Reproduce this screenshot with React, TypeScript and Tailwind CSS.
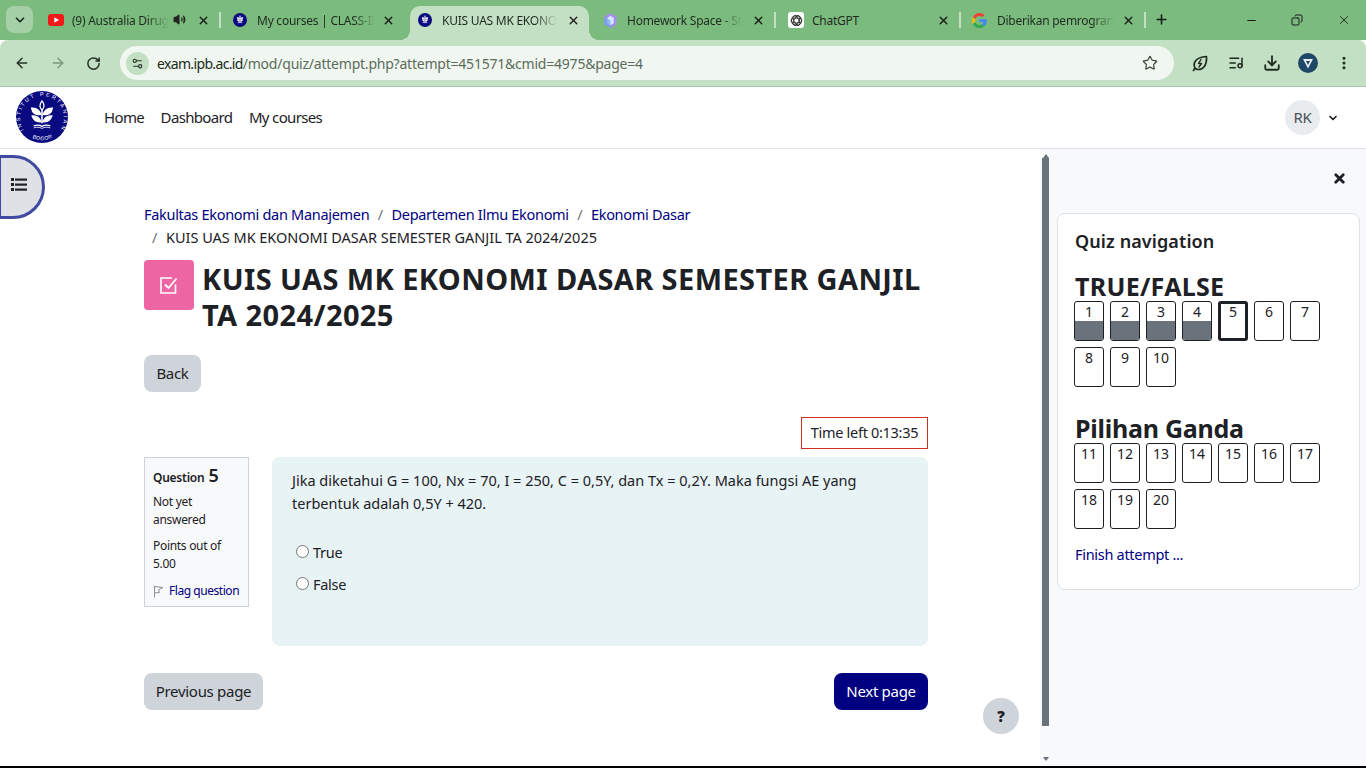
import { ArrowLeft, ArrowRight, ChevronDown, Download, EllipsisVertical, ListMusic, Minus, Plus, RotateCw, Settings2, Star, Volume2, X, Copy } from "lucide-react"

function IpbLogo({ size = 14 }: { size?: number }) {
  const big = size > 30
  return (
    <svg width={size} height={size} viewBox="0 0 100 100" className="shrink-0">
      <circle cx="50" cy="50" r="50" fill="#0a0a80" />
      <defs>
        <path id="logoTop" d="M 15 75 A 42 42 0 1 1 85 75" />
        <path id="logoBottom" d="M 27 88 A 44 44 0 0 0 73 88" />
      </defs>
      {big && (
        <text fontSize="10.5" fill="#fff" fontFamily="Liberation Sans, sans-serif">
          <textPath href="#logoTop" textLength="178">INSTITUT PERTANIAN</textPath>
        </text>
      )}
      {big && (
        <text fontSize="10" fill="#fff" fontFamily="Liberation Sans, sans-serif">
          <textPath href="#logoBottom" startOffset="10%" textLength="40">BOGOR</textPath>
        </text>
      )}
      <g fill="none" stroke="#fff" strokeWidth={big ? 2.4 : 5}>
        <path d="M50 19c-5 6-5 12 0 18 5-6 5-12 0-18z" />
        <path d="M50 62V37" strokeWidth="3" />
        <path d="M30 33c1 9 8 14 18 12-3-8-9-13-18-12z" fill="#fff" />
        <path d="M70 33c-1 9-8 14-18 12 3-8 9-13 18-12z" fill="#fff" />
        <path d="M31 48c3 8 9 12 17 11-3-8-9-12-17-11z" fill="#fff" />
        <path d="M69 48c-3 8-9 12-17 11 3-8 9-12 17-11z" fill="#fff" />
        <path d="M34 67c6-2 11-2 16 1 5-3 10-3 16-1" />
        <path d="M34 71c6-2 11-2 16 1 5-3 10-3 16-1" strokeWidth="1.6" />
      </g>
    </svg>
  )
}

function YoutubeIcon() {
  return (
    <svg width="16" height="12" viewBox="0 0 16 12" className="shrink-0">
      <rect width="16" height="12" rx="3" fill="#f01818" />
      <path d="M6.3 3.3v5.4L11 6z" fill="#fff" />
    </svg>
  )
}

function GemIcon() {
  return (
    <svg width="15" height="15" viewBox="0 0 16 16" className="shrink-0">
      <path d="M8 0l6.500 4v8L8 16l-6.500-4V4z" fill="#a48cf0" />
      <path d="M8 3l3.500 2.200v5.600L8 13l-3.500-2.200V5.200z" fill="#d7e6fb" />
      <path d="M1.500 4L8 8v8l-6.500-4z" fill="#6fa4ec" opacity="0.7" />
    </svg>
  )
}

function ChatGptIcon() {
  return (
    <span className="size-[16px] rounded-[3px] bg-white flex items-center justify-center shrink-0">
      <svg width="13" height="13" viewBox="0 0 16 16" fill="none" stroke="#222" strokeWidth="1.1">
        <circle cx="8" cy="8" r="6.400" />
        <ellipse cx="8" cy="8" rx="6.400" ry="3" />
        <ellipse cx="8" cy="8" rx="6.400" ry="3" transform="rotate(60 8 8)" />
        <ellipse cx="8" cy="8" rx="6.400" ry="3" transform="rotate(120 8 8)" />
      </svg>
    </span>
  )
}

function GoogleIcon() {
  return (
    <svg width="15" height="15" viewBox="0 0 48 48" className="shrink-0 -ml-px">
      <path fill="#EA4335" d="M24 9.500c3.500 0 6.700 1.200 9.200 3.600l6.900-6.900C35.900 2.400 30.500 0 24 0 14.600 0 6.500 5.400 2.600 13.200l8 6.200C12.500 13.700 17.800 9.500 24 9.500z" />
      <path fill="#4285F4" d="M47 24.500c0-1.600-.1-3.100-.4-4.500H24v9h12.900c-.6 3-2.200 5.500-4.700 7.200l7.700 6C44.400 38 47 31.800 47 24.500z" />
      <path fill="#FBBC05" d="M10.600 28.600c-.5-1.400-.8-3-.8-4.600s.3-3.200.8-4.600l-8-6.200C.9 16.500 0 20.100 0 24s.9 7.500 2.600 10.800z" />
      <path fill="#34A853" d="M24 48c6.500 0 11.900-2.100 15.900-5.800l-7.700-6c-2.200 1.400-4.900 2.300-8.200 2.300-6.200 0-11.500-4.200-13.400-9.900l-8 6.200C6.500 42.600 14.600 48 24 48z" />
    </svg>
  )
}

const tabs = [
  { title: "(9) Australia Dirug", icon: <YoutubeIcon />, sound: true },
  { title: "My courses | CLASS-II", icon: <IpbLogo /> },
  { title: "KUIS UAS MK EKONO", icon: <IpbLogo />, active: true },
  { title: "Homework Space - St", icon: <GemIcon /> },
  { title: "ChatGPT", icon: <ChatGptIcon />, plain: true },
  { title: "Diberikan pemrogran", icon: <GoogleIcon /> },
]

function BrowserChrome() {
  return (
    <div className="h-[87px] shrink-0 border-b border-[#a9c7a9]">
      <div className="h-[40px] bg-[#7bbc7e] flex items-end relative">
        <div className="absolute left-[6px] top-[6px] size-[27px] rounded-[8px] bg-[#a5d0a6] flex items-center justify-center">
          <ChevronDown className="size-[14px] text-[#1f2a1f]" strokeWidth={3} />
        </div>
        <div className="ml-[37px] flex items-end">
          {tabs.map((tab, i) => (
            <div key={tab.title} className="w-[185px] h-[34px] flex items-center pl-[11px] pb-[6px] relative">
              {tab.active && (
                <>
                  <div className="absolute inset-x-[3px] inset-y-0 bg-[#c4e0c4] rounded-t-[10px]" />
                  <div className="absolute left-[-7px] bottom-0 size-[10px] bg-[radial-gradient(circle_at_0_0,transparent_10px,#c4e0c4_10px)]" />
                  <div className="absolute right-[-7px] bottom-0 size-[10px] bg-[radial-gradient(circle_at_100%_0,transparent_10px,#c4e0c4_10px)]" />
                </>
              )}
              <div className="relative">{tab.icon}</div>
              <div className={`whitespace-nowrap text-[12px] tracking-[-0.25px] text-[#1f2a1f] absolute left-[35px] top-[6px] ${tab.plain ? "" : "[mask-image:linear-gradient(to_left,transparent,black_22px)]"}`}>
                {tab.title}
              </div>
              {tab.sound && <Volume2 className="absolute left-[136px] top-[7px] size-[13px] text-[#222]" fill="#222" />}
              <X className="absolute left-[160px] top-[8px] size-[13px] text-[#1a1a1a]" strokeWidth={2.5} />
              {i !== 1 && i !== 2 && <div className="absolute right-[1px] top-[6px] w-[2px] h-[16px] bg-[#c4e0c4]" />}
            </div>
          ))}
        </div>
        <Plus className="absolute left-[1154px] top-[12px] size-[15px] text-[#1a1a1a]" strokeWidth={2.5} />
        <Minus className="absolute left-[1245px] top-[14px] size-[13px] text-[#1a1a1a]" />
        <Copy className="absolute left-[1291px] top-[14px] size-[12px] text-[#1a1a1a] -scale-x-100" />
        <X className="absolute left-[1337px] top-[13px] size-[14px] text-[#1a1a1a]" strokeWidth={1.5} />
      </div>
      <div className="h-[46px] bg-[#c4e0c4] flex items-center rounded-t-[8px] relative">
        <ArrowLeft className="ml-[14px] size-[16px] text-[#263226]" strokeWidth={2.2} />
        <ArrowRight className="ml-[20px] size-[16px] text-[#7e9680]" strokeWidth={2.2} />
        <RotateCw className="ml-[20px] size-[15px] text-[#263226]" strokeWidth={2.4} />
        <div className="ml-[19px] w-[1054px] h-[34px] rounded-full bg-[#f0f7f0] flex items-center pl-[6px] pr-[16px]">
          <div className="size-[23px] rounded-full bg-[#c4e0c4] flex items-center justify-center">
            <Settings2 className="size-[13px] text-[#263226]" />
          </div>
          <div className="ml-[8px] flex-1 text-[14px] text-[#5c6b5c] whitespace-nowrap tracking-[-0.22px]">
            <span className="text-[#1a2a1a] tracking-[-0.65px]">exam.ipb.ac.id</span>/mod/quiz/attempt.php?attempt=451571&amp;cmid=4975&amp;page=4
          </div>
          <Star className="size-[16px] text-[#3c4a3c]" strokeWidth={1.8} />
        </div>
        <div className="ml-[8px] flex items-center text-[#1f2a1f]">
          <div className="w-[36px] flex justify-center">
            <svg width="18" height="18" viewBox="0 0 18 18" fill="none" stroke="currentColor" strokeWidth="1.7" strokeLinejoin="round" strokeLinecap="round">
              <path d="M4 14C1.800 9.500 3.500 3.500 15.500 2.500c.5 8.500-3 13-8.500 13-1.500 0-2.300-.5-3-1.500zM2.500 16.500L4 14" />
              <path d="M10 5.500L7.500 9.500h3L8 13" strokeWidth="1.400" />
            </svg>
          </div>
          <div className="w-[36px] flex justify-center"><ListMusic className="size-[16px]" strokeWidth={2.2} /></div>
          <div className="w-[36px] flex justify-center"><Download className="size-[18px]" strokeWidth={2.4} /></div>
          <div className="w-[36px] flex justify-center">
            <span className="size-[20px] rounded-full bg-[#1f4766] flex items-center justify-center">
              <svg width="12" height="12" viewBox="0 0 12 12"><path d="M1 2h10L6 11.500z" fill="#e8edf0" /><path d="M4 4h4L6 8z" fill="#1f4766" /></svg>
            </span>
          </div>
          <div className="w-[36px] flex justify-center"><EllipsisVertical className="size-[16px]" strokeWidth={2.6} /></div>
        </div>
      </div>
    </div>
  )
}

function QuizButton({ n, answered, current }: { n: number; answered?: boolean; current?: boolean }) {
  return (
    <div className={`w-[30px] h-[40px] rounded-[3px] bg-white overflow-hidden flex flex-col items-center ${current ? "border-[3px] border-[#1d2125]" : "border border-[#1d2125]"}`}>
      <div className={`text-[14px] leading-[17px] text-[#1d2125] ${current ? "mt-[-1px]" : "mt-[1px]"}`}>{n}</div>
      {answered && <div className="w-full mt-auto h-[19px] bg-[#6a737b]" />}
    </div>
  )
}

function QuizGrid({ from, to, current, answered }: { from: number; to: number; current?: number; answered?: number }) {
  const nums = []
  for (let i = from; i <= to; i++) nums.push(i)
  return (
    <div className="flex flex-wrap gap-x-[6px] gap-y-[6px] w-[260px] -ml-px">
      {nums.map((n) => (
        <QuizButton key={n} n={n} current={n === current} answered={answered ? n <= answered : false} />
      ))}
    </div>
  )
}

export default function App() {
  return (
    <div className="h-[768px] w-[1366px] overflow-hidden flex flex-col bg-white relative font-['Noto_Sans',sans-serif] text-[#1d2125]">
      <BrowserChrome />

      <header className="h-[62px] shrink-0 border-b border-[#dee2e6] flex items-center">
        <div className="ml-[16px] mt-[-2px]">
          <IpbLogo size={52} />
        </div>
        <nav className="ml-[36px] flex gap-[16.5px] text-[15px] tracking-[-0.65px] mt-[-1px]">
          <span>Home</span>
          <span>Dashboard</span>
          <span>My courses</span>
        </nav>
        <div className="ml-auto mr-[46px] size-[35px] rounded-full bg-[#e9ecef] flex items-center justify-center text-[15px] text-[#495057] tracking-[-0.3px]">RK</div>
        <ChevronDown className="absolute left-[1327px] top-[112px] size-[12px]" strokeWidth={3.4} />
      </header>

      <div className="flex-1 flex min-h-0">
        <main className="w-[1040px] shrink-0 pl-[144px] pr-[112px] pt-[54px] relative">
          <div className="text-[14.5px] leading-[23px] tracking-[-0.3px]">
            <div className="text-[#000080] flex gap-[8.5px]">
              <span>Fakultas Ekonomi dan Manajemen</span>
              <span className="text-[#6a737b]">/</span>
              <span>Departemen Ilmu Ekonomi</span>
              <span className="text-[#6a737b]">/</span>
              <span>Ekonomi Dasar</span>
            </div>
            <div className="flex gap-[9px] pl-[8px]">
              <span className="text-[#6a737b]">/</span>
              <span className="tracking-[-0.03px]">KUIS UAS MK EKONOMI DASAR SEMESTER GANJIL TA 2024/2025</span>
            </div>
          </div>

          <div className="flex mt-[11px]">
            <div className="size-[50px] rounded-[4px] bg-[#ee65a3] flex items-center justify-center shrink-0">
              <svg width="20" height="20" viewBox="0 0 20 20" fill="none" stroke="#fff" strokeWidth="1.6">
                <path d="M16.500 9.500V18H2V3h11" />
                <path d="M6 9.500l3.500 3.500L17.500 3.500" strokeWidth="1.800" />
              </svg>
            </div>
            <h1 className="ml-[8px] text-[29px] leading-[36px] font-bold tracking-[0.4px] w-[730px] mt-[1px]">
              KUIS UAS MK EKONOMI DASAR SEMESTER GANJIL TA 2024/2025
            </h1>
          </div>

          <button className="block mt-[22px] h-[37px] w-[57px] rounded-[8px] bg-[#ced4da] text-[15px] tracking-[-0.3px]">Back</button>

          <div className="flex justify-end mt-[25px]">
            <div className="h-[32px] w-[127px] border border-[#ca3120] flex items-center justify-center text-[14.5px] tracking-[-0.3px]">Time left 0:13:35</div>
          </div>

          <div className="flex mt-[8px]">
            <div className="w-[105px] h-[150px] bg-[#f8f9fa] border border-[#ced4da] pl-[8px] pr-[4px] pt-[6px] text-[12px] leading-[18px] tracking-[-0.3px] shrink-0">
              <div className="flex items-baseline gap-[4px] font-semibold">
                <span className="text-[12px] tracking-[-0.25px]">Question</span>
                <span className="text-[18px] leading-[22px] font-semibold">5</span>
              </div>
              <div className="mt-[6px]">Not yet answered</div>
              <div className="mt-[8px]">Points out of 5.00</div>
              <div className="mt-[9px] flex items-center gap-[5px] text-[#000080]">
                <svg width="11" height="13" viewBox="0 0 11 13" fill="none" stroke="#8a9096" strokeWidth="1" className="shrink-0">
                  <path d="M1.500 1v11.500M1.500 1.500L10 2.500 5.500 4.800 6.500 7.500 1.500 8" />
                </svg>
                <span className="whitespace-nowrap tracking-[-0.45px]">Flag question</span>
              </div>
            </div>
            <div className="ml-[23px] flex-1 h-[189px] rounded-[8px] bg-[#e7f3f5] pl-[20px] pr-[40px] pt-[12px] text-[14.5px] leading-[23px] tracking-[0px]">
              <p>Jika diketahui G = 100, Nx = 70, I = 250, C = 0,5Y, dan Tx = 0,2Y. Maka fungsi AE yang terbentuk adalah 0,5Y + 420.</p>
              <label className="flex items-center mt-[26px] ml-[4px] gap-[4px] tracking-[-0.3px]">
                <span className="size-[13px] rounded-full border border-[#767676] bg-white -mt-[2px]" />
                <span>True</span>
              </label>
              <label className="flex items-center mt-[9px] ml-[4px] gap-[4px] tracking-[-0.3px]">
                <span className="size-[13px] rounded-full border border-[#767676] bg-white -mt-[2px]" />
                <span>False</span>
              </label>
            </div>
          </div>

          <div className="flex justify-between mt-[27px]">
            <button className="h-[37px] w-[119px] rounded-[8px] bg-[#ced4da] text-[15px] tracking-[-0.3px]">Previous page</button>
            <button className="h-[37px] w-[94px] rounded-[8px] bg-[#000080] text-white text-[15px] tracking-[-0.3px]">Next page</button>
          </div>

          <div className="absolute left-[983px] top-[549px] size-[36px] rounded-full bg-[#ced4da] flex items-center justify-center text-[15px] font-black">?</div>

          <div className="absolute left-[-2px] top-[6px] w-[47px] h-[64px] rounded-r-full bg-[#dee2e6] border-[3px] border-[#3f4aa0] flex items-center pl-[10px] pb-[5px]">
            <svg width="16" height="13" viewBox="0 0 16 13" fill="#1d2125">
              <rect x="0" y="0" width="3" height="3" />
              <rect x="0" y="5" width="3" height="3" />
              <rect x="0" y="10" width="3" height="3" />
              <rect x="4" y="0.500" width="12" height="2.200" />
              <rect x="4" y="5.500" width="12" height="2.200" />
              <rect x="4" y="10.500" width="12" height="2.200" />
            </svg>
          </div>
        </main>

        <aside className="flex-1 bg-[#f8f9fa] flex min-w-0">
          <div className="w-[17px] shrink-0 pl-[2px]">
            <div className="w-[7px] flex flex-col items-center">
              <div className="mt-[5px] border-x-[3px] border-x-transparent border-b-[4px] border-b-[#6a737b]" />
              <div className="w-[7px] h-[568px] bg-[#6a737b]" />
              <div className="mt-[31px] border-x-[3px] border-x-transparent border-t-[4px] border-t-[#6a737b]" />
            </div>
          </div>
          <div className="flex-1 min-w-0 pr-[6px]">
            <div className="h-[64px] pt-[22px] pl-[275px]">
              <X className="size-[15px] text-[#1d2125]" strokeWidth={4.5} />
            </div>
            <div className="h-[377px] bg-white border border-[#dee2e6] rounded-[8px] pl-[17px] pt-[15px]">
              <h2 className="text-[18px] leading-[24px] font-semibold tracking-[0.1px]">Quiz navigation</h2>
              <h3 className="mt-[19px] text-[25px] leading-[29px] font-bold tracking-[0.3px] h-[29px]">TRUE/FALSE</h3>
              <QuizGrid from={1} to={10} current={5} answered={4} />
              <h3 className="mt-[27px] text-[25px] leading-[29px] font-bold tracking-[-0.25px] h-[29px]">Pilihan Ganda</h3>
              <QuizGrid from={11} to={20} />
              <div className="mt-[14px] text-[14.5px] leading-[22px] tracking-[-0.3px] text-[#000080]">Finish attempt ...</div>
            </div>
          </div>
        </aside>
      </div>

      <div className="absolute left-0 bottom-0 w-full h-[2px] bg-black" />
    </div>
  )
}
